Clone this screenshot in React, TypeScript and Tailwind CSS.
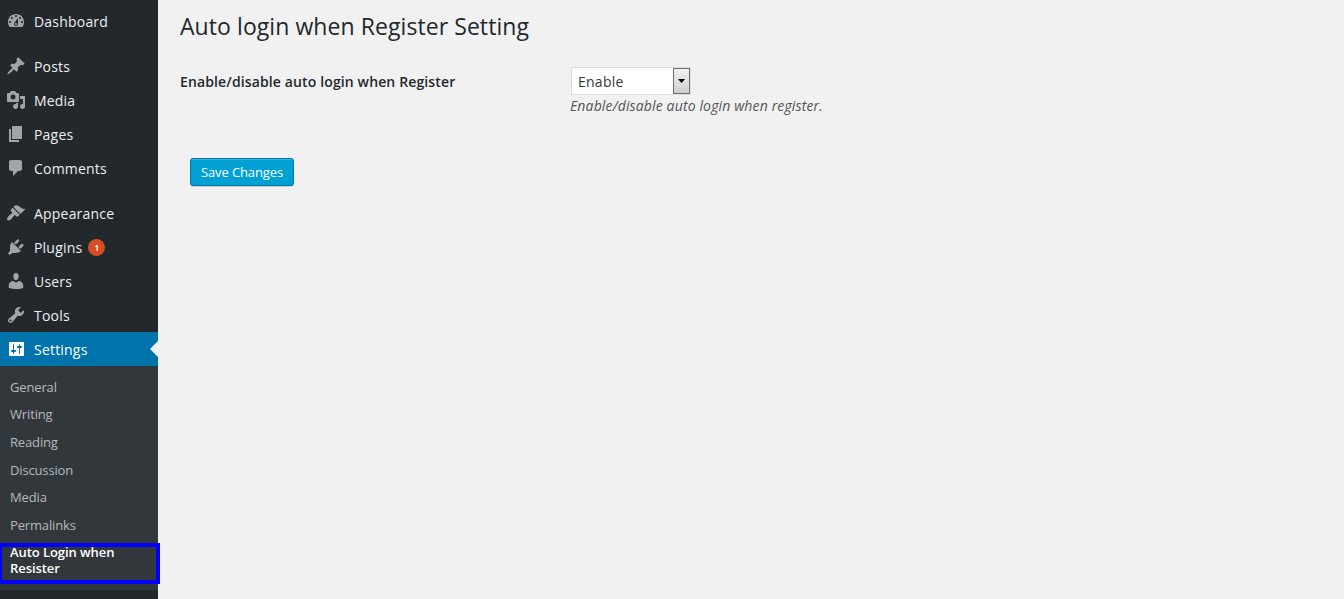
type MenuEntry = { label: string; icon: string; badge?: string; active?: boolean };

const groups: MenuEntry[][] = [
  [
    {
      label: "Dashboard",
      icon: "M3.76 16h12.48c1.1-1.37 1.76-3.11 1.76-5 0-4.42-3.58-8-8-8s-8 3.58-8 8c0 1.89.66 3.63 1.76 5zM10 4c.55 0 1 .45 1 1s-.45 1-1 1-1-.45-1-1 .45-1 1-1zM6 6c.55 0 1 .45 1 1s-.45 1-1 1-1-.45-1-1 .45-1 1-1zm8 0c.55 0 1 .45 1 1s-.45 1-1 1-1-.45-1-1 .45-1 1-1zm-5.37 5.55L12 7v6c0 1.1-.9 2-2 2s-2-.9-2-2c0-.57.24-1.08.63-1.45zM4 10c.55 0 1 .45 1 1s-.45 1-1 1-1-.45-1-1 .45-1 1-1zm12 0c.55 0 1 .45 1 1s-.45 1-1 1-1-.45-1-1 .45-1 1-1zm-5 3c0-.55-.45-1-1-1s-1 .45-1 1 .45 1 1 1 1-.45 1-1z",
    },
  ],
  [
    {
      label: "Posts",
      icon: "M10.44 3.02l1.82-1.82 6.36 6.35-1.83 1.82c-1.05-.68-2.48-.57-3.41.36l-.75.75c-.92.93-1.04 2.35-.35 3.41l-1.83 1.82-2.41-2.41-2.8 2.79c-.42.42-3.38 2.71-3.8 2.29s1.86-3.39 2.28-3.81l2.79-2.79L4.1 9.36l1.83-1.82c1.05.69 2.48.57 3.4-.36l.75-.75c.93-.92 1.05-2.35.36-3.41z",
    },
    {
      label: "Media",
      icon: "M13 11V4c0-.55-.45-1-1-1h-1.67L9 1H5L3.67 3H2c-.55 0-1 .45-1 1v7c0 .55.45 1 1 1h10c.55 0 1-.45 1-1zM7 4.5c1.38 0 2.5 1.12 2.5 2.5S8.38 9.5 7 9.5 4.5 8.38 4.5 7 5.62 4.5 7 4.5zM14 6h5v10.5c0 1.38-1.12 2.5-2.5 2.5S14 17.88 14 16.5s1.12-2.5 2.5-2.5c.17 0 .34.02.5.05V9h-3V6zm-4 8.05V13h2v3.5c0 1.38-1.12 2.5-2.5 2.5S7 17.88 7 16.5 8.12 14 9.5 14c.17 0 .34.02.5.05z",
    },
    { label: "Pages", icon: "M6 15V2h10v13H6zm-1 1h8v2H3V5h2v11z" },
    {
      label: "Comments",
      icon: "M5 2h9c1.1 0 2 .9 2 2v7c0 1.1-.9 2-2 2h-2l-5 5v-5H5c-1.1 0-2-.9-2-2V4c0-1.1.9-2 2-2z",
    },
  ],
  [
    {
      label: "Appearance",
      icon: "M14.48 11.06L7.41 3.99l1.5-1.5c.5-.56 2.3-.47 3.51.32 1.21.8 1.43 1.28 2.91 2.1 1.18.64 2.45 1.26 4.45.85zm-.71.71L6.7 4.7 4.93 6.47c-.39.39-.39 1.02 0 1.41l1.06 1.06c.39.39.39 1.03 0 1.42-.6.6-1.43 1.11-2.21 1.69-.35.26-.7.53-1.01.84C1.43 14.23.4 16.08 1.4 17.07c.99 1 2.84-.03 4.18-1.36.31-.31.58-.66.85-1.02.57-.78 1.08-1.61 1.69-2.21.39-.39 1.02-.39 1.41 0l1.06 1.06c.39.39 1.02.39 1.41 0z",
    },
    {
      label: "Plugins",
      badge: "1",
      icon: "M13.11 4.36L9.87 7.6 8 5.73l3.24-3.24c.35-.34 1.05-.2 1.56.32.52.51.66 1.21.31 1.55zm-8 1.77l.91-1.12 9.01 9.01-1.19.84c-.71.71-2.63 1.16-3.82 1.16H6.14L4.9 17.26c-.59.59-1.54.59-2.12 0-.59-.58-.59-1.53 0-2.12l1.24-1.24v-3.88c0-1.13.4-3.19 1.09-3.89zm7.26 3.97l3.24-3.24c.34-.35 1.04-.21 1.55.31.52.51.66 1.21.31 1.55l-3.24 3.25z",
    },
    {
      label: "Users",
      icon: "M10 9.25c-2.27 0-2.73-3.44-2.73-3.44C7 4.02 7.82 2 9.97 2c2.16 0 2.98 2.02 2.71 3.81 0 0-.41 3.44-2.68 3.44zm0 2.57L12.72 10c2.39 0 4.52 2.33 4.52 4.53v2.49s-3.65 1.13-7.24 1.13c-3.65 0-7.24-1.13-7.24-1.13v-2.49c0-2.25 1.94-4.48 4.47-4.48z",
    },
    {
      label: "Tools",
      icon: "M16.68 9.77c-1.34 1.34-3.3 1.67-4.95.99l-5.41 6.52c-.99.99-2.59.99-3.58 0s-.99-2.59 0-3.57l6.52-5.42c-.68-1.65-.35-3.61.99-4.95 1.28-1.28 3.12-1.62 4.72-1.06l-2.89 2.89 2.82 2.82 2.86-2.87c.53 1.58.18 3.39-1.08 4.65zM3.81 16.21c.4.39 1.04.39 1.43 0 .4-.4.4-1.04 0-1.43-.39-.4-1.03-.4-1.43 0-.39.39-.39 1.03 0 1.43z",
    },
    {
      label: "Settings",
      active: true,
      icon: "M18 16V4c0-.55-.45-1-1-1H4c-.55 0-1 .45-1 1v12c0 .55.45 1 1 1h13c.55 0 1-.45 1-1zM8 11h1c.55 0 1 .45 1 1s-.45 1-1 1H8v1.5c0 .28-.22.5-.5.5s-.5-.22-.5-.5V13H6c-.55 0-1-.45-1-1s.45-1 1-1h1V5.5c0-.28.22-.5.5-.5s.5.22.5.5V11zm5-2h-1c-.55 0-1-.45-1-1s.45-1 1-1h1V5.5c0-.28.22-.5.5-.5s.5.22.5.5V7h1c.55 0 1 .45 1 1s-.45 1-1 1h-1v5.5c0 .28-.22.5-.5.5s-.5-.22-.5-.5V9z",
    },
  ],
];

const submenu = ["General", "Writing", "Reading", "Discussion", "Media", "Permalinks"];

function MenuItem({ label, icon, badge, active }: MenuEntry) {
  return (
    <li className={`relative flex h-[34px] items-center pl-1.5 ${active ? "bg-[#0073aa] text-white" : "text-[#eeeeee]"}`}>
      <svg viewBox="0 0 20 20" className={`size-5 shrink-0 ${active ? "fill-white" : "fill-[#a0a5aa]"}`}>
        <path d={icon} />
      </svg>
      <span className="ml-2 pt-0.5 text-[14px] leading-[18px] tracking-[0.2px]">{label}</span>
      {badge && (
        <span className="ml-1.5 flex size-[17px] items-center justify-center rounded-full bg-[#d54e21] text-[9px] font-semibold leading-[17px] text-white">
          {badge}
        </span>
      )}
      {active && (
        <span className="absolute right-0 top-[9px] border-y-8 border-r-8 border-y-transparent border-r-[#f1f1f1]" />
      )}
    </li>
  );
}

function Sidebar() {
  return (
    <nav className="w-[158px] shrink-0 bg-[#23282d] pt-1">
      <div className="flex flex-col gap-[11px]">
        {groups.map((group, i) => (
          <ul key={i}>
            {group.map((entry) => (
              <MenuItem key={entry.label} {...entry} />
            ))}
          </ul>
        ))}
      </div>
      <ul className="h-[224px] bg-[#32373c] pt-[7.8px] text-[13px] leading-[15.6px] tracking-[-0.15px] text-[#b4b9be]">
        {submenu.map((label) => (
          <li key={label} className="px-2.5 py-1.5">
            {label}
          </li>
        ))}
        <li className="relative px-2.5 py-1.5 font-semibold tracking-[-0.07px] text-white">
          Auto Login when Resister
          <span className="absolute left-0 top-[3.6px] h-[41px] w-[160px] border-4 border-l-2 border-[#0000ff]" />
        </li>
      </ul>
    </nav>
  );
}

export default function App() {
  return (
    <div className="flex h-[599px] w-[1344px] overflow-hidden bg-[#f1f1f1] font-['Open_Sans',sans-serif]">
      <Sidebar />
      <main className="flex-1 pl-[22px] pt-3 text-[#23282d]">
        <h1 className="text-[23px] font-normal leading-[29px] tracking-[0.07px]">Auto login when Register Setting</h1>
        <div className="mt-[26px] flex">
          <div className="w-[390px] pt-[6px] text-[14px] font-semibold leading-[18px] tracking-[0.13px]">
            Enable/disable auto login when Register
          </div>
          <div>
            <div className="ml-px flex h-7 w-[120px] border border-[#dddddd] bg-white text-[#32373c]">
              <span className="flex-1 pl-1.5 pt-px text-[14px] leading-[26px] tracking-[0.25px]">Enable</span>
              <span className="flex w-[17px] items-center justify-center border border-[#707070] bg-linear-to-b from-[#f2f2f2] to-[#cfcfcf]">
                <svg viewBox="0 0 7 4" className="h-1 w-[7px] fill-black">
                  <path d="M0 0h7L3.5 4z" />
                </svg>
              </span>
            </div>
            <p className="text-[14px] italic leading-[21px] tracking-[0.14px] text-[#555555]">
              Enable/disable auto login when register.
            </p>
          </div>
        </div>
        <button className="ml-2.5 mt-[42px] block h-7 w-[104px] rounded-[3px] border border-[#0073aa] bg-[#00a0d2] text-[13px] leading-[26px] tracking-[-0.12px] text-white shadow-[inset_0_1px_0_rgba(120,200,230,.5),0_1px_0_rgba(0,0,0,.15)]">
          Save Changes
        </button>
      </main>
    </div>
  );
}
